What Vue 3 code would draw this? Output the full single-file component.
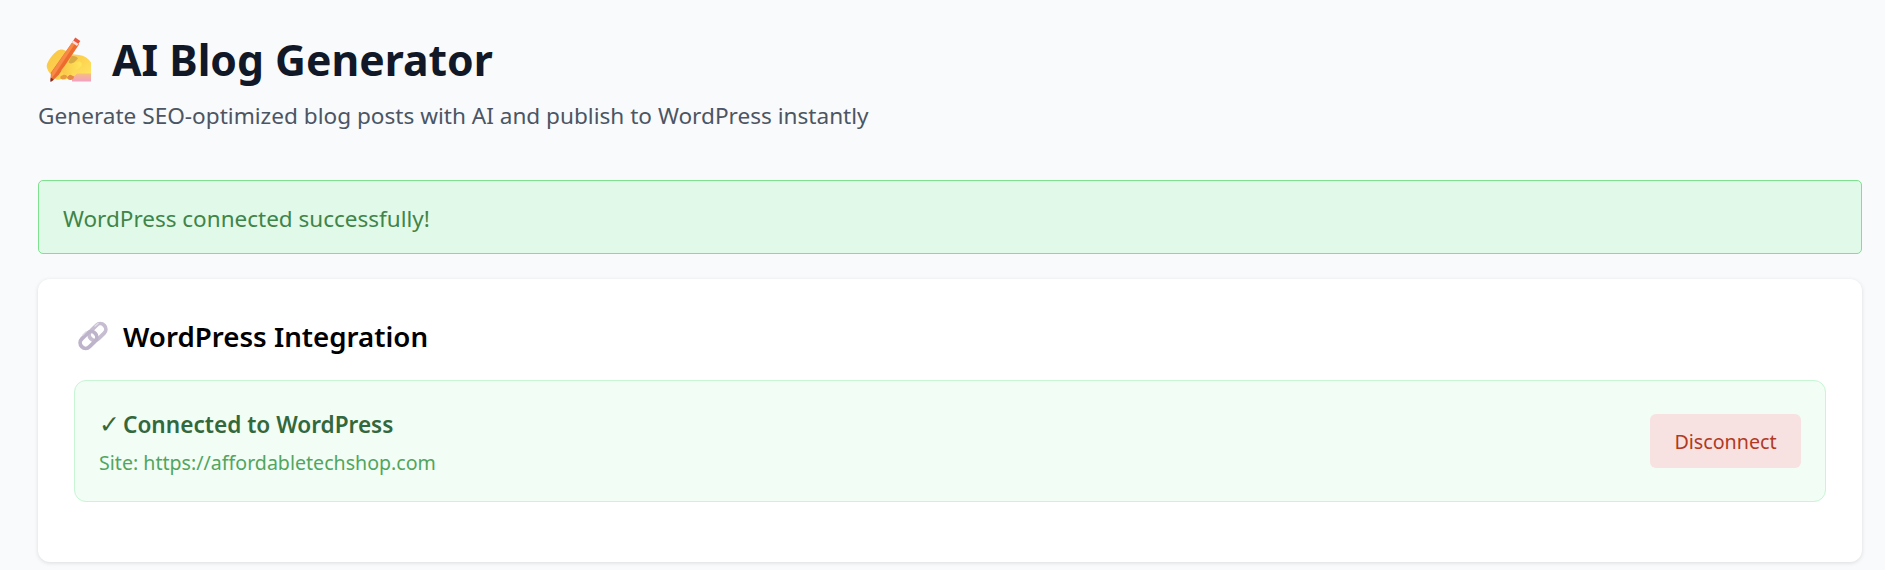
<script setup>
const title = 'AI Blog Generator'
</script>

<template>
  <div class="page">
    <header class="head">
      <h1 class="title">
        <svg class="hand" viewBox="0 0 46 46" aria-hidden="true">
          <defs>
            <linearGradient id="skin" x1="0" y1="0" x2="1" y2="1">
              <stop offset="0" stop-color="#f9c646" />
              <stop offset="0.55" stop-color="#fdd24f" />
              <stop offset="1" stop-color="#fde866" />
            </linearGradient>
            <linearGradient id="wrist" x1="0" y1="0" x2="0" y2="1">
              <stop offset="0" stop-color="#f9c66a" />
              <stop offset="1" stop-color="#f2a0c4" />
            </linearGradient>
            <linearGradient id="finger" x1="0" y1="0" x2="1" y2="0">
              <stop offset="0" stop-color="#f9c64a" />
              <stop offset="1" stop-color="#ffe659" />
            </linearGradient>
          </defs>
          <path d="M26 34h19v10.500H26z" fill="url(#wrist)" />
          <path d="M1 27C3 22 7 17 11 14c3-2 6-2 8-.5l5 3.500 9 1c5 .5 9 3 12 7.500v11H31c-2 3-5 3.500-7 3l-3 2.500c-2 1-3 .5-4-.5l-3 1c-2 .5-4 .5-5-1l-5-5C1.500 33 0 30 1 27z" fill="url(#skin)" />
          <path d="M15 39c-1.500 1-.5 3.500 2 3.500s3-1 4-2.500c.5-1.500-1-2.500-3-2.500z" fill="#e79a3f" />
          <path d="M21 40c0 2 2 3.500 4 3s3-2 3-3.500l-4-2z" fill="#e58a45" />
          <path d="M25 19.500c3-1 6 0 7 2l-6 6-3.500-2z" fill="#b98a3c" opacity=".55" />
          <path d="M27.500 3.500l5.500 4-20 30-6.500 6.500-2-1 .5-7.500z" fill="#ee6b2f" />
          <path d="M27.500 3.500l2.500 1.800-20.500 31-4.500 6 .5-6.800z" fill="#f78a45" />
          <path d="M29.300 .6l5 3.400-2 3-5-3.500z" fill="#e9573f" />
          <path d="M27.300 3.500l5 3.500-1.300 2-5-3.500z" fill="#f6dfe4" />
          <path d="M4.800 40.500l2.800 2-2.400 2.300-1-.3z" fill="#7d2f33" />
          <path d="M15.500 33c2-3 5-5 8-6l8-2.500c3-.5 5 1.500 4 4-.5 1.500-2 2.500-3.500 3.500-3 2-6 5-9 6-3 1-6.500-.5-7.500-5z" fill="url(#finger)" />
        </svg>
        <span>{{ title }}</span>
      </h1>
      <p class="sub">Generate SEO-optimized blog posts with AI and publish to WordPress instantly</p>
    </header>

    <div class="alert">WordPress connected successfully!</div>

    <section class="card">
      <h2 class="card-title">
        <svg class="link" viewBox="0 0 30 30" aria-hidden="true">
          <g fill="none">
            <rect x="10" y="5.500" width="19" height="11" rx="5.500" transform="rotate(-45 19.500 11)" stroke="#c6bdd1" stroke-width="3.800" />
            <rect x="1" y="13.500" width="19" height="11" rx="5.500" transform="rotate(-45 10.500 19)" stroke="#bdb3ca" stroke-width="3.800" />
            <path d="M17 5l3-2.500" stroke="#e4dfea" stroke-width="1.400" stroke-linecap="round" />
            <path d="M5 14l3-3" stroke="#dcd6e3" stroke-width="1.400" stroke-linecap="round" />
          </g>
        </svg>
        <span>WordPress Integration</span>
      </h2>

      <div class="status">
        <div class="status-text">
          <div class="status-main"><span class="tick">✓</span>Connected to WordPress</div>
          <div class="status-site">Site: https://affordabletechshop.com</div>
        </div>
        <button class="disconnect" type="button">Disconnect</button>
      </div>
    </section>
  </div>
</template>

<style>
html, body { margin: 0; background: #f9fafb; }
</style>

<style scoped>
.page {
  box-sizing: border-box;
  min-height: 570px;
  padding: 35px 23px 0 38px;
  background: #f9fafb;
  font-family: "Noto Sans", "Open Sans", sans-serif;
}
.head { margin-bottom: 49px; }
.title {
  display: flex;
  align-items: center;
  gap: 20px;
  margin: 0 0 0 8px;
  font-size: 42.7px;
  line-height: 50px;
  font-weight: 700;
  color: #111827;
}
.hand { width: 46px; height: 46px; flex: none; }
.sub {
  margin: 16px 0 0;
  font-size: 22.6px;
  line-height: 30px;
  color: #4b5563;
}
.alert {
  box-sizing: border-box;
  height: 74px;
  padding: 2px 24px 0;
  display: flex;
  align-items: center;
  border: 1px solid #7fe08f;
  border-radius: 5px;
  background: #e1f9e8;
  color: #3f8448;
  font-size: 22.5px;
}
.card {
  box-sizing: border-box;
  height: 283px;
  margin-top: 25px;
  padding: 37px 36px 0;
  border-radius: 12px;
  background: #fff;
  box-shadow: 0 1px 4px rgba(0, 0, 0, .12);
}
.card-title {
  display: flex;
  align-items: center;
  gap: 15px;
  margin: 0 0 0 4px;
  font-size: 27.7px;
  line-height: 40px;
  font-weight: 600;
  color: #000;
}
.link { width: 30px; height: 30px; flex: none; }
.status {
  box-sizing: border-box;
  height: 122px;
  margin-top: 24px;
  padding: 0 24px;
  display: flex;
  align-items: center;
  justify-content: space-between;
  border: 1px solid #c8f5d4;
  border-radius: 12px;
  background: #f1fdf5;
}
.status-text { padding-top: 4px; }
.status-main {
  display: flex;
  align-items: center;
  font-size: 22.6px;
  line-height: 30px;
  font-weight: 600;
  color: #32683c;
}
.tick {
  width: 24px;
  flex: none;
  font-family: "DejaVu Sans", sans-serif;
  font-size: 25px;
  font-weight: 400;
}
.status-site {
  margin-top: 10px;
  font-size: 19.6px;
  line-height: 26px;
  color: #52a55e;
}
.disconnect {
  box-sizing: border-box;
  width: 151px;
  height: 54px;
  border: 0;
  border-radius: 6px;
  background: #f8e1e1;
  color: #b03a24;
  font: 400 19.7px "Noto Sans", "Open Sans", sans-serif;
}
</style>
